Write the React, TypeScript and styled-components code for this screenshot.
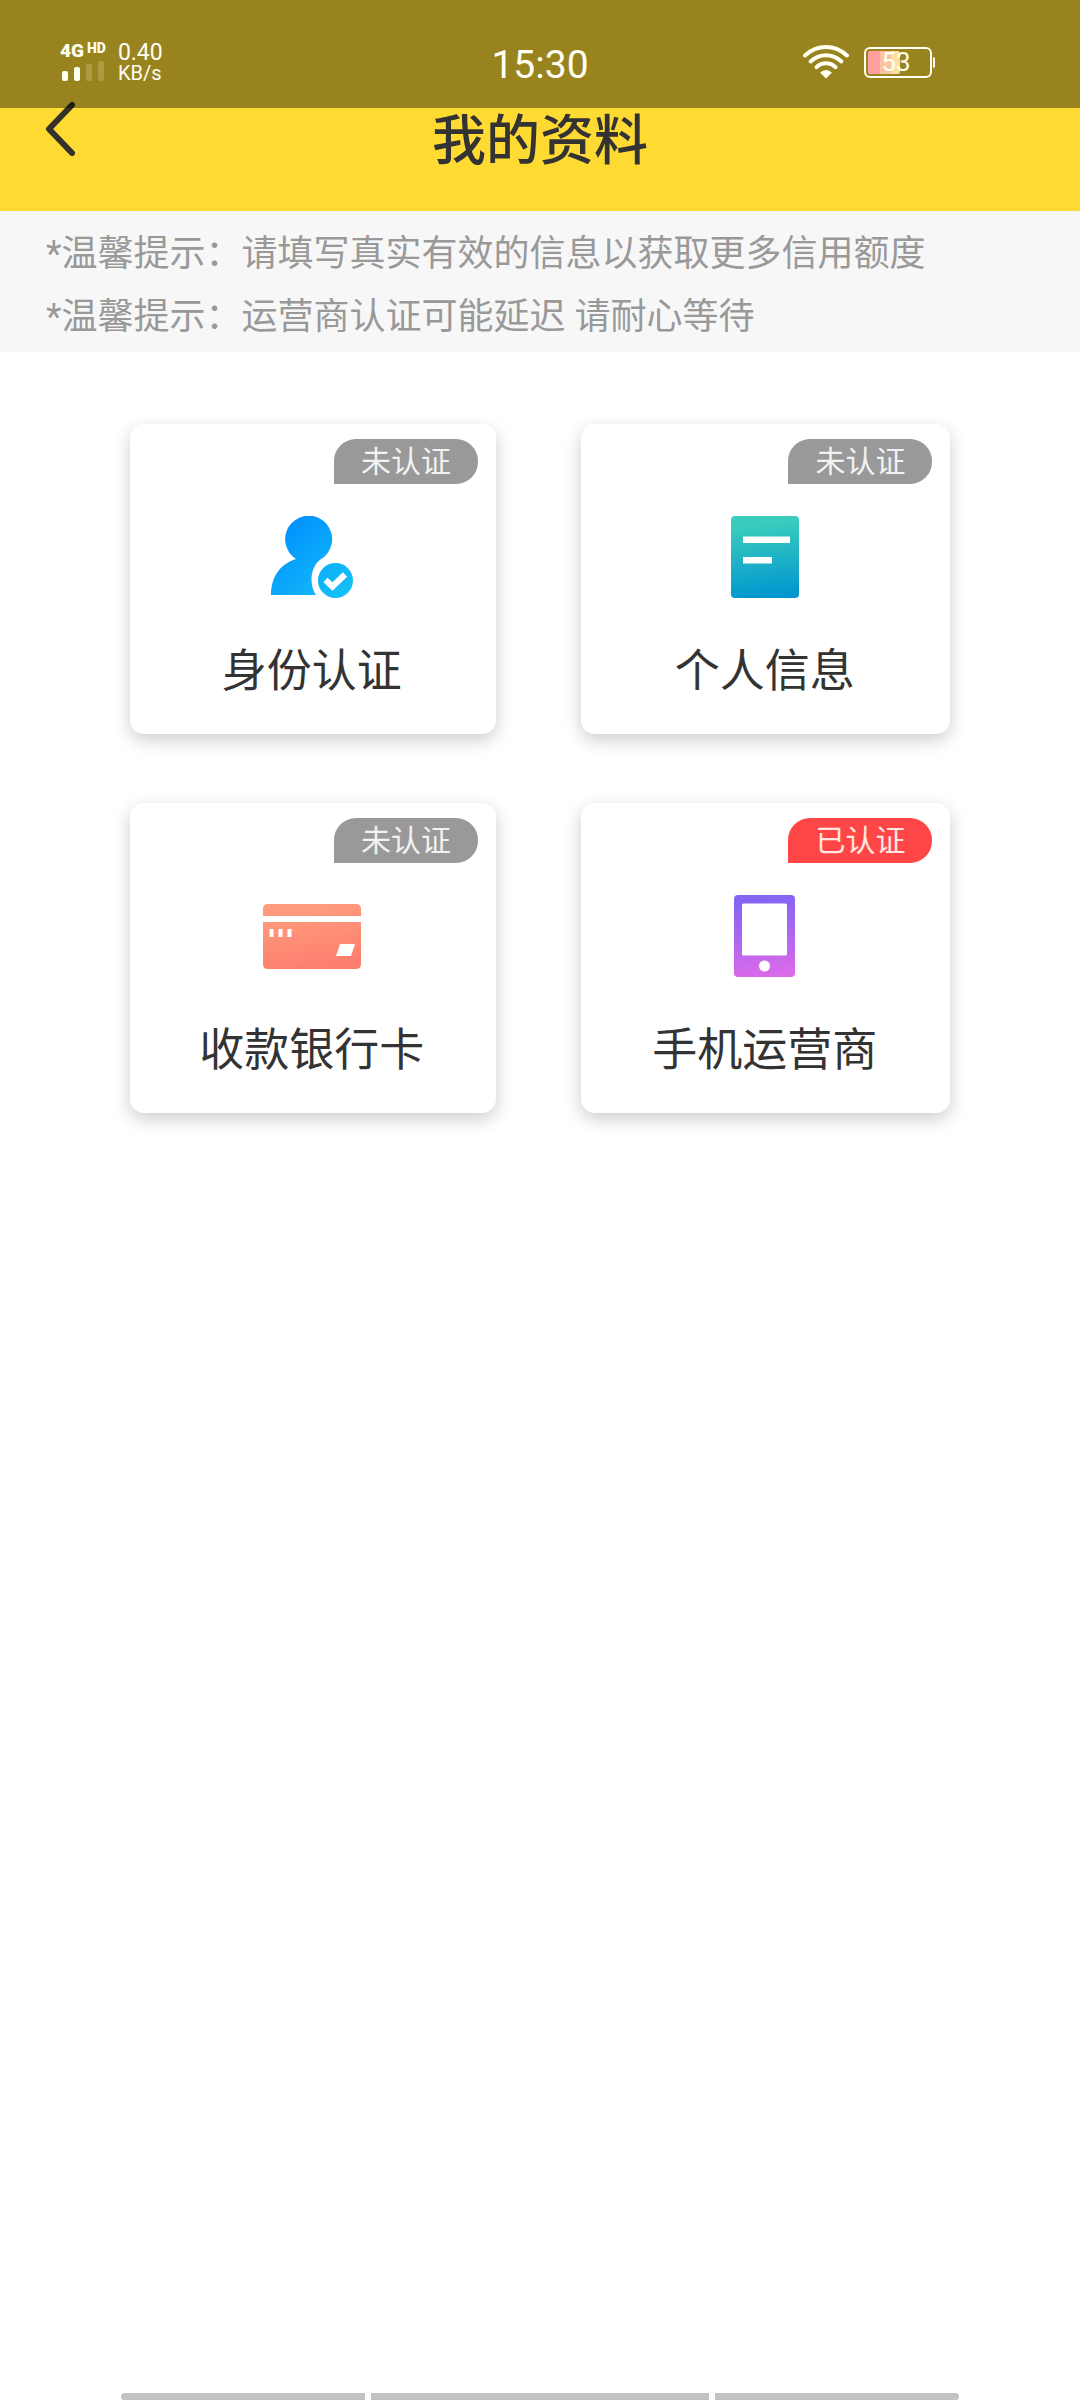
import React from 'react';
import styled, { createGlobalStyle } from 'styled-components';

const GlobalStyle = createGlobalStyle`
  *, *::before, *::after { box-sizing: border-box; }
  body {
    margin: 0;
    background: #fff;
    color: #333;
    font-family: Roboto, 'Noto Sans CJK SC', sans-serif;
  }
  button { font: inherit; color: inherit; border: 0; padding: 0; cursor: pointer; }
`;

const Page = styled.div`
  position: relative;
  display: flex;
  flex-direction: column;
  min-height: 100vh;
`;

/* The system status bar is translucent and floats over the app header. */
const StatusBar = styled.div`
  position: absolute;
  inset: 0 0 auto 0;
  z-index: 2;
  display: grid;
  grid-template-columns: 1fr auto 1fr;
  align-items: center;
  height: 108px;
  padding: 16px 60px 0;
  color: #fffff4;
  background: rgba(0, 0, 0, 0.4);
  pointer-events: none;
`;

const StatusLeft = styled.div`
  display: flex;
  align-items: center;
  gap: 12px;
`;

const Carrier = styled.div`
  display: flex;
  flex-direction: column;
  gap: 2px;
`;

const Network = styled.div`
  display: flex;
  align-items: flex-start;
  gap: 3px;
  font-family: Roboto, sans-serif;
  font-weight: 900;
`;

const NetworkName = styled.span`
  font-size: 19px;
  line-height: 16px;
`;

const NetworkTag = styled.span`
  font-size: 14px;
  line-height: 10px;
`;

const Signal = styled.div`
  display: flex;
  align-items: flex-end;
  gap: 6px;
  height: 20px;
  padding-left: 2px;
`;

const SignalBar = styled.i<{ $height: number; $on: boolean }>`
  width: 6px;
  height: ${p => p.$height}px;
  border-radius: 2px;
  background: ${p => (p.$on ? '#fffff4' : 'rgba(255, 255, 220, 0.2)')};
`;

const Speed = styled.div`
  display: flex;
  flex-direction: column;
  padding-top: 2px;
  line-height: 20px;
`;

const SpeedValue = styled.span`
  font-size: 23px;
`;

const SpeedUnit = styled.span`
  font-size: 20px;
`;

const Clock = styled.time`
  padding-top: 6px;
  font-size: 39px;
  line-height: 48px;
`;

const StatusRight = styled.div`
  display: flex;
  align-items: center;
  justify-content: flex-end;
  gap: 15px;
  padding-right: 85px;
`;

const Battery = styled.div`
  position: relative;
  display: flex;
  align-items: center;
  width: 68px;
  height: 31px;
  margin-right: 3px;
  padding: 2px;
  border: 2px solid #fffff4;
  border-radius: 6px;

  &::after {
    content: '';
    position: absolute;
    right: -5px;
    top: 8px;
    width: 2px;
    height: 11px;
    border-radius: 0 2px 2px 0;
    background: #fffff4;
  }
`;

const BatteryFill = styled.div`
  height: 23px;
  border-radius: 2px;
  background: linear-gradient(90deg, #ff9f9f 0 36%, #fcc3a3 36% 72%, #fde0a0 72%);
`;

const BatteryText = styled.span`
  position: absolute;
  inset: 0 4px 0 0;
  font-size: 26px;
  line-height: 27px;
  text-align: center;
`;

const Header = styled.header`
  display: grid;
  grid-template-columns: 120px 1fr 120px;
  height: 211px;
  padding-top: 87px;
  background: #ffda33;
`;

const BackButton = styled.button`
  display: flex;
  align-items: center;
  height: 84px;
  padding-left: 45px;
  background: none;
`;

const Title = styled.h1`
  margin: 0;
  padding-top: 15px;
  font-size: 54px;
  line-height: 80px;
  font-weight: 500;
  text-align: center;
`;

const Notice = styled.section`
  padding: 12px 46px 3px;
  background: #f7f7f7;
  color: #999;
`;

const NoticeLine = styled.p`
  margin: 0;
  font-size: 36px;
  line-height: 63px;
`;

const Cards = styled.main`
  display: grid;
  grid-template-columns: 366fr 369fr;
  gap: 69px 85px;
  padding: 72px 12%;
`;

const Card = styled.button`
  display: flex;
  flex-direction: column;
  align-items: center;
  padding: 15px 18px 29px 16px;
  border-radius: 14px;
  background: #fff;
  box-shadow: 0 6px 18px rgba(0, 0, 0, 0.2);
`;

const Badge = styled.span<{ $verified: boolean }>`
  align-self: flex-end;
  width: 144px;
  border-radius: 22px 22px 22px 0;
  font-size: 30px;
  line-height: 45px;
  text-align: center;
  color: ${p => (p.$verified ? '#ffe6e0' : '#f2f2f2')};
  background: ${p => (p.$verified ? '#ff4646' : '#999')};
`;

const IconBox = styled.span`
  display: flex;
  align-items: center;
  justify-content: center;
  height: 82px;
  margin: 32px 0 41px;
`;

const CardLabel = styled.span`
  font-size: 45px;
  line-height: 66px;
`;

const HomeBar = styled.div`
  display: grid;
  grid-template-columns: 244fr 338fr 244fr;
  gap: 6px;
  margin: auto 121px 0;
`;

const HomeSegment = styled.span`
  height: 7px;
  background: #c2c2c2;

  &:first-child { border-radius: 4px 0 0 4px; }
  &:last-child { border-radius: 0 4px 4px 0; }
`;

const WifiIcon = () => (
  <svg width="46" height="34" viewBox="0 0 46 34" fill="none" stroke="#fffff4" strokeWidth="4" strokeLinecap="round" aria-hidden="true">
    <path d="M2 10.5C14 -.8 32 -.8 44 10.5" />
    <path d="M7.600 16.500C16.500 8.200 29.500 8.200 38.400 16.500" />
    <path d="M13.400 22.200C19 17 27 17 32.600 22.200" />
    <path d="M17 27.500Q23 22.500 29 27.500L23 33.500Z" fill="#fffff4" stroke="none" />
  </svg>
);

const BackIcon = () => (
  <svg width="31" height="56" viewBox="0 0 31 56" fill="none" stroke="#333129" strokeWidth="6" strokeLinecap="round" strokeLinejoin="round" aria-hidden="true">
    <path d="M27 4L4 28L27 52" />
  </svg>
);

const IdentityIcon = () => (
  <svg width="82" height="82" viewBox="0 0 82 82" aria-hidden="true">
    <defs>
      <linearGradient id="identity" gradientUnits="userSpaceOnUse" x1="12" y1="8" x2="80" y2="82">
        <stop offset="0" stopColor="#0090ff" />
        <stop offset="1" stopColor="#17c4f7" />
      </linearGradient>
    </defs>
    <g fill="url(#identity)">
      <path d="M25 43A23.500 23.500 0 1 1 49.500 43.500C39 51 38 69 45 79H0C0 61 9 48 25 43Z" />
      <circle cx="64.500" cy="64.500" r="17.500" />
    </g>
    <path d="M54.500 64L61.500 70.500L74 58.500" fill="none" stroke="#fff" strokeWidth="6" />
  </svg>
);

const ProfileIcon = () => (
  <svg width="68" height="82" viewBox="0 0 68 82" aria-hidden="true">
    <defs>
      <linearGradient id="profile" x1="0.450" y1="0" x2="0.550" y2="1">
        <stop offset="0.080" stopColor="#3acdbd" />
        <stop offset="1" stopColor="#0096cf" />
      </linearGradient>
    </defs>
    <rect width="68" height="82" rx="4" fill="url(#profile)" />
    <path d="M12 20.500H59V27H12ZM12 41H41V47.500H12Z" fill="#fff" />
  </svg>
);

const BankCardIcon = () => (
  <svg width="98" height="66" viewBox="0 0 98 66" aria-hidden="true">
    <defs>
      <linearGradient id="bankcard" gradientUnits="userSpaceOnUse" x1="42" y1="0" x2="54" y2="66">
        <stop offset="0.100" stopColor="#fe9b7c" />
        <stop offset="1" stopColor="#fe7e6e" />
      </linearGradient>
    </defs>
    <path d="M5 1H93Q98 1 98 6V13H0V6Q0 1 5 1ZM0 19H98V61Q98 66 93 66H5Q0 66 0 61Z" fill="url(#bankcard)" />
    <path d="M6.500 26H10.500V34H6.500ZM15.500 26H19.500V34H15.500ZM24.500 26H28.500V34H24.500ZM77 41H92L88 53H73Z" fill="#fff" />
  </svg>
);

const PhoneIcon = () => (
  <svg width="61" height="82" viewBox="0 0 61 82" aria-hidden="true">
    <defs>
      <linearGradient id="phone" x1="0.450" y1="0" x2="0.550" y2="1">
        <stop offset="0.080" stopColor="#8765f3" />
        <stop offset="1" stopColor="#dc6aea" />
      </linearGradient>
    </defs>
    <rect width="61" height="82" rx="4" fill="url(#phone)" />
    <rect x="8" y="8.500" width="45" height="52" rx="1.500" fill="#fff" />
    <circle cx="30.500" cy="71" r="5.500" fill="#fff" />
  </svg>
);

const signal = [
  { height: 10, on: true },
  { height: 14, on: true },
  { height: 17, on: false },
  { height: 20, on: false },
];

const items = [
  { label: '身份认证', verified: false, Icon: IdentityIcon },
  { label: '个人信息', verified: false, Icon: ProfileIcon },
  { label: '收款银行卡', verified: false, Icon: BankCardIcon },
  { label: '手机运营商', verified: true, Icon: PhoneIcon },
];

export default function App() {
  const level = 53;
  return (
    <>
      <GlobalStyle />
      <Page>
        <StatusBar>
          <StatusLeft>
            <Carrier>
              <Network>
                <NetworkName>4G</NetworkName>
                <NetworkTag>HD</NetworkTag>
              </Network>
              <Signal>
                {signal.map(bar => (
                  <SignalBar key={bar.height} $height={bar.height} $on={bar.on} />
                ))}
              </Signal>
            </Carrier>
            <Speed>
              <SpeedValue>0.40</SpeedValue>
              <SpeedUnit>KB/s</SpeedUnit>
            </Speed>
          </StatusLeft>
          <Clock>15:30</Clock>
          <StatusRight>
            <WifiIcon />
            <Battery>
              <BatteryFill style={{ width: `${level}%` }} />
              <BatteryText>{level}</BatteryText>
            </Battery>
          </StatusRight>
        </StatusBar>

        <Header>
          <BackButton type="button" aria-label="返回"><BackIcon /></BackButton>
          <Title>我的资料</Title>
        </Header>

        <Notice>
          <NoticeLine>*温馨提示：请填写真实有效的信息以获取更多信用额度</NoticeLine>
          <NoticeLine>*温馨提示：运营商认证可能延迟 请耐心等待</NoticeLine>
        </Notice>

        <Cards>
          {items.map(({ label, verified, Icon }) => (
            <Card key={label} type="button">
              <Badge $verified={verified}>{verified ? '已认证' : '未认证'}</Badge>
              <IconBox><Icon /></IconBox>
              <CardLabel>{label}</CardLabel>
            </Card>
          ))}
        </Cards>

        <HomeBar aria-hidden="true">
          <HomeSegment />
          <HomeSegment />
          <HomeSegment />
        </HomeBar>
      </Page>
    </>
  );
}
